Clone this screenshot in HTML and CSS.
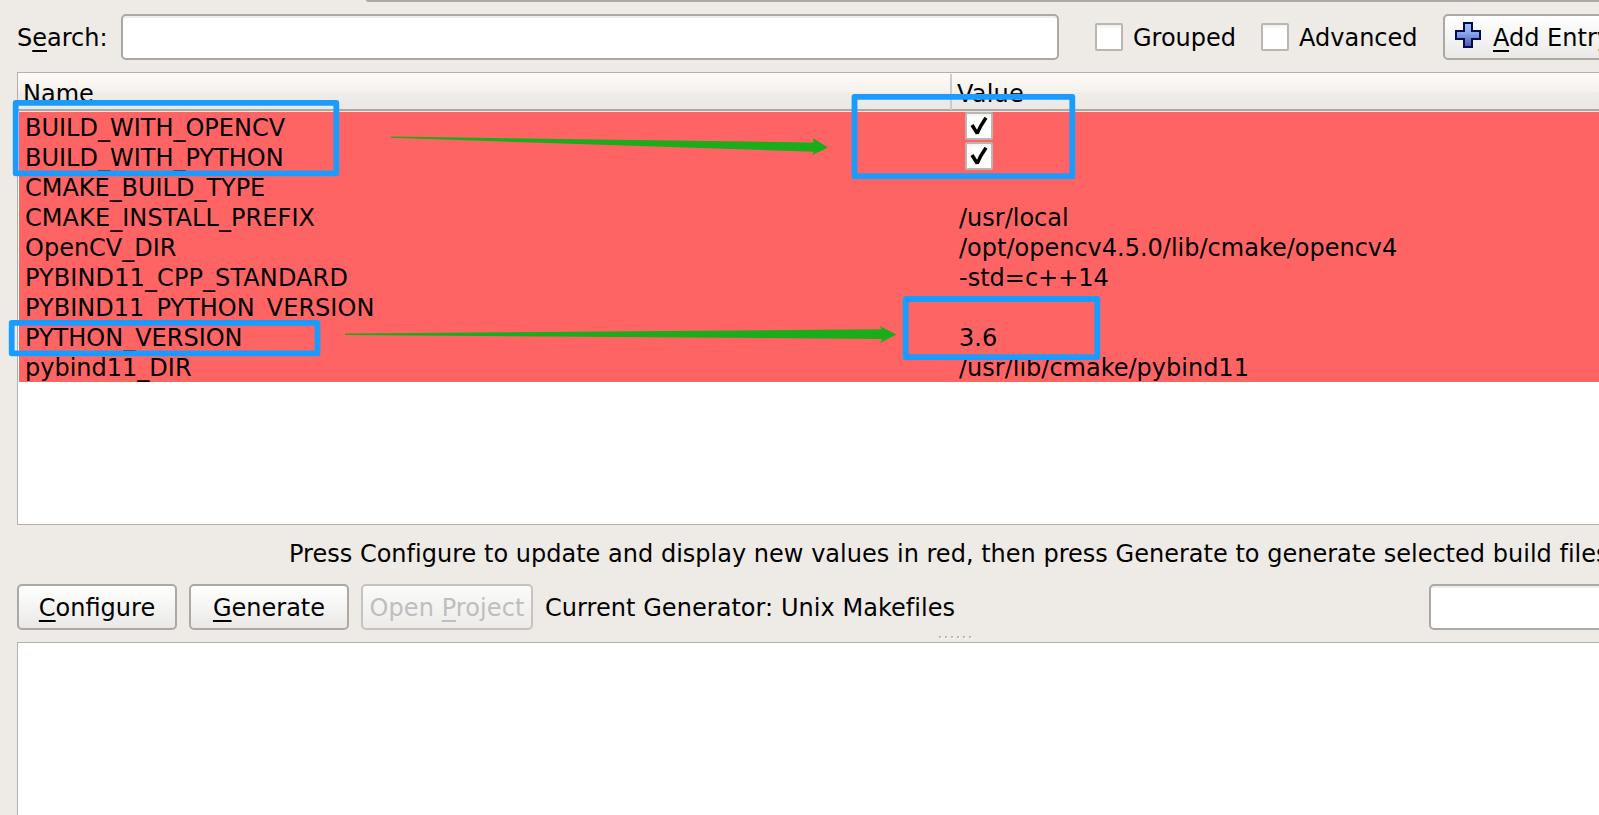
FILE: index.html
```html
<!DOCTYPE html>
<html lang="en">
<head>
<meta charset="utf-8">
<title>CMake</title>
<link rel="stylesheet" href="styles.css">
</head>
<body>
<div class="window">
  <div class="tab-edge"></div>
  <div class="toolbar">
    <label class="label search-label">S<u>e</u>arch:</label>
    <div class="field search-field"></div>
    <span class="check"></span><span class="label grouped">Grouped</span>
    <span class="check"></span><span class="label advanced">Advanced</span>
    <div class="button add-entry">
      <svg class="plus" width="26" height="26" viewBox="0 0 26 26">
        <defs><linearGradient id="pg" x1="0" y1="0" x2="0" y2="1"><stop offset="0" stop-color="#a3c3ff"/><stop offset=".45" stop-color="#86a4ea"/><stop offset="1" stop-color="#4053a2"/></linearGradient></defs>
        <path d="M9 1H17V9H25V17H17V25H9V17H1V9H9Z" fill="url(#pg)" stroke="#020a50" stroke-width="2"/>
      </svg>
      <span class="label"><u>A</u>dd Entry</span>
    </div>
  </div>

  <div class="table">
    <div class="thead"><div class="th name-col">Name</div><div class="th value-col">Value</div></div>
    <div class="row"><div class="name-col">BUILD_WITH_OPENCV</div><div class="value-col"><span class="check cell-check"><svg width="28" height="28" viewBox="0 0 28 28"><path d="M7 13L12.2 21.4Q15.2 14 21 5.8" fill="none" stroke="#000" stroke-width="3.5" stroke-linejoin="bevel"/></svg></span></div></div>
    <div class="row"><div class="name-col">BUILD_WITH_PYTHON</div><div class="value-col"><span class="check cell-check"><svg width="28" height="28" viewBox="0 0 28 28"><path d="M7 13L12.2 21.4Q15.2 14 21 5.8" fill="none" stroke="#000" stroke-width="3.5" stroke-linejoin="bevel"/></svg></span></div></div>
    <div class="row tight"><div class="name-col">CMAKE_BUILD_TYPE</div><div class="value-col"></div></div>
    <div class="row"><div class="name-col loose">CMAKE_INSTALL_PREFIX</div><div class="value-col">/usr/local</div></div>
    <div class="row"><div class="name-col">OpenCV_DIR</div><div class="value-col">/opt/opencv4.5.0/lib/cmake/opencv4</div></div>
    <div class="row"><div class="name-col looser">PYBIND11_CPP_STANDARD</div><div class="value-col">-std=c++14</div></div>
    <div class="row"><div class="name-col slight">PYBIND11_PYTHON_VERSION</div><div class="value-col"></div></div>
    <div class="row"><div class="name-col">PYTHON_VERSION</div><div class="value-col">3.6</div></div>
    <div class="row"><div class="name-col">pybind11_DIR</div><div class="value-col">/usr/lib/cmake/pybind11</div></div>
  </div>

  <div class="hint">Press Configure to update and display new values in red, then press Generate to generate selected build files</div>

  <div class="actions">
    <div class="button configure"><span class="label"><u>C</u>onfigure</span></div>
    <div class="button generate"><span class="label"><u>G</u>enerate</span></div>
    <div class="button open disabled"><span class="label">Open <u>P</u>roject</span></div>
    <span class="label generator">Current Generator: Unix Makefiles</span>
    <div class="field progress"></div>
  </div>
  <div class="grip"><i></i><i></i><i></i><i></i><i></i><i></i></div>
  <div class="output"></div>

  <svg class="annotations" width="1599" height="815" viewBox="0 0 1599 815">
    <g fill="none" stroke="#1a9bff" stroke-width="5.8" stroke-linejoin="round">
      <rect x="15.7" y="102.9" width="320.6" height="70.4"/>
      <rect x="854.5" y="96.9" width="217.8" height="79.3"/>
      <rect x="11.7" y="322.8" width="305.8" height="30.5"/>
      <rect x="905.7" y="299" width="191.6" height="58.2"/>
    </g>
    <g fill="#1aad19">
      <path d="M391 136.5L813.5 142.4L813 138L828 147.4L812 155.2L814 151.7L391 137.8Z"/>
      <path d="M345 333.5L881.5 329.2L880 326L896.5 334.4L880 343L882 339L345 335Z"/>
    </g>
  </svg>
</div>
</body>
</html>
```
FILE: styles.css
```css
* { box-sizing: border-box; }
body {
  margin: 0;
  width: 1599px;
  height: 815px;
  overflow: hidden;
  background: #eeebe6;
  color: #000;
  font: 24px/30px "DejaVu Sans", sans-serif;
}
.window {
  position: relative;
  width: 1599px;
  height: 815px;
  overflow: hidden;
  display: flex;
  flex-direction: column;
}
u {
  text-decoration: underline;
  text-decoration-thickness: 2px;
  text-underline-offset: 4px;
  text-decoration-skip-ink: none;
}
.label { flex: none; white-space: nowrap; padding-top: 2px; }
.tab-edge {
  flex: none;
  height: 2px;
  margin-left: 366px;
  background: #aca8a4;
  border-bottom-left-radius: 4px;
}
.toolbar {
  flex: none;
  display: flex;
  align-items: center;
  height: 46px;
  margin-top: 12px;
  padding-left: 17px;
}
.search-label { width: 104px; }
.field {
  height: 46px;
  border: 2px solid #aca8a4;
  border-radius: 5px;
  background: #fff;
  box-shadow: inset 0 2px 0 #efeeed;
}
.search-field { flex: none; width: 938px; margin-right: 36px; }
.check {
  flex: none;
  width: 28px;
  height: 28px;
  border: 2px solid #bab6b1;
  border-radius: 2px;
  background: linear-gradient(#f0f0ef, #fff 4px);
}
.grouped { width: 138px; padding-left: 10px; }
.advanced { width: 154px; padding-left: 10px; }
.button {
  flex: none;
  display: flex;
  align-items: center;
  justify-content: center;
  height: 46px;
  border: 2px solid #aca8a4;
  border-radius: 5px;
  background: linear-gradient(#fff, #eae9e6);
}
.add-entry { width: 190px; justify-content: flex-start; padding-left: 10px; }
.plus { margin: -4px 12px 0 0; flex: none; }
.table {
  flex: none;
  height: 453px;
  width: 1590px;
  margin: 12px 0 0 17px;
  border: 1px solid #b4b0ac;
  border-right: 0;
  padding-left: 1px;
  background: #fff;
}
.thead {
  display: flex;
  height: 39px;
  padding-top: 1px;
  margin-left: -1px;
  background: linear-gradient(#fdfaf7, #f5f2ee 50%, #eeedea 52%, #e9e8e5);
  border-bottom: 1px solid #e8e5e2;
  box-shadow: inset 0 -2px 0 #aba7a3;
}
.th { line-height: 41px; height: 36px; }
.thead .name-col { width: 934px; padding-left: 5px; border-right: 2px solid #ccc9c6; }
.thead .value-col { padding-left: 5px; letter-spacing: 0.2px; }
.row { display: flex; height: 30px; line-height: 32px; background: #ff6464; }
.name-col { flex: none; width: 934px; padding-left: 6px; white-space: nowrap; }
.loose { letter-spacing: 0.07px; }
.looser { letter-spacing: 0.1px; }
.slight { letter-spacing: 0.03px; }
.tight { letter-spacing: -0.03px; }
.row .value-col { padding-left: 6px; white-space: nowrap; }
.cell-check { display: block; margin-left: 6px; }
.cell-check svg { display: block; margin: -2px; }
.hint {
  flex: none;
  margin: 13px 0 0 289px;
  height: 46px;
  line-height: 32px;
  letter-spacing: 0.015px;
  white-space: nowrap;
}
.actions {
  flex: none;
  display: flex;
  align-items: center;
  height: 46px;
  padding-left: 17px;
}
.configure { width: 160px; margin-right: 12px; }
.generate { width: 160px; margin-right: 12px; }
.open { width: 172px; margin-right: 12px; }
.open .label { letter-spacing: 0.08px; }
.disabled { color: #bebebe; border-color: #c5c2bf; background: linear-gradient(#fbfbfa, #ecebe8); }
.generator { width: 884px; letter-spacing: 0.05px; }
.progress { flex: none; width: 190px; }
.grip {
  flex: none;
  display: flex;
  gap: 4px;
  height: 12px;
  padding: 6px 0 0 939px;
}
.grip i { width: 2px; height: 2px; background: #bbb7b3; box-shadow: 1px 1px 0 #faf9f8; }
.output {
  flex: 1;
  margin-left: 17px;
  border-top: 1px solid #b4b0ac;
  border-left: 1px solid #b4b0ac;
  background: #fff;
}
.annotations { position: absolute; left: 0; top: 0; pointer-events: none; }
```
